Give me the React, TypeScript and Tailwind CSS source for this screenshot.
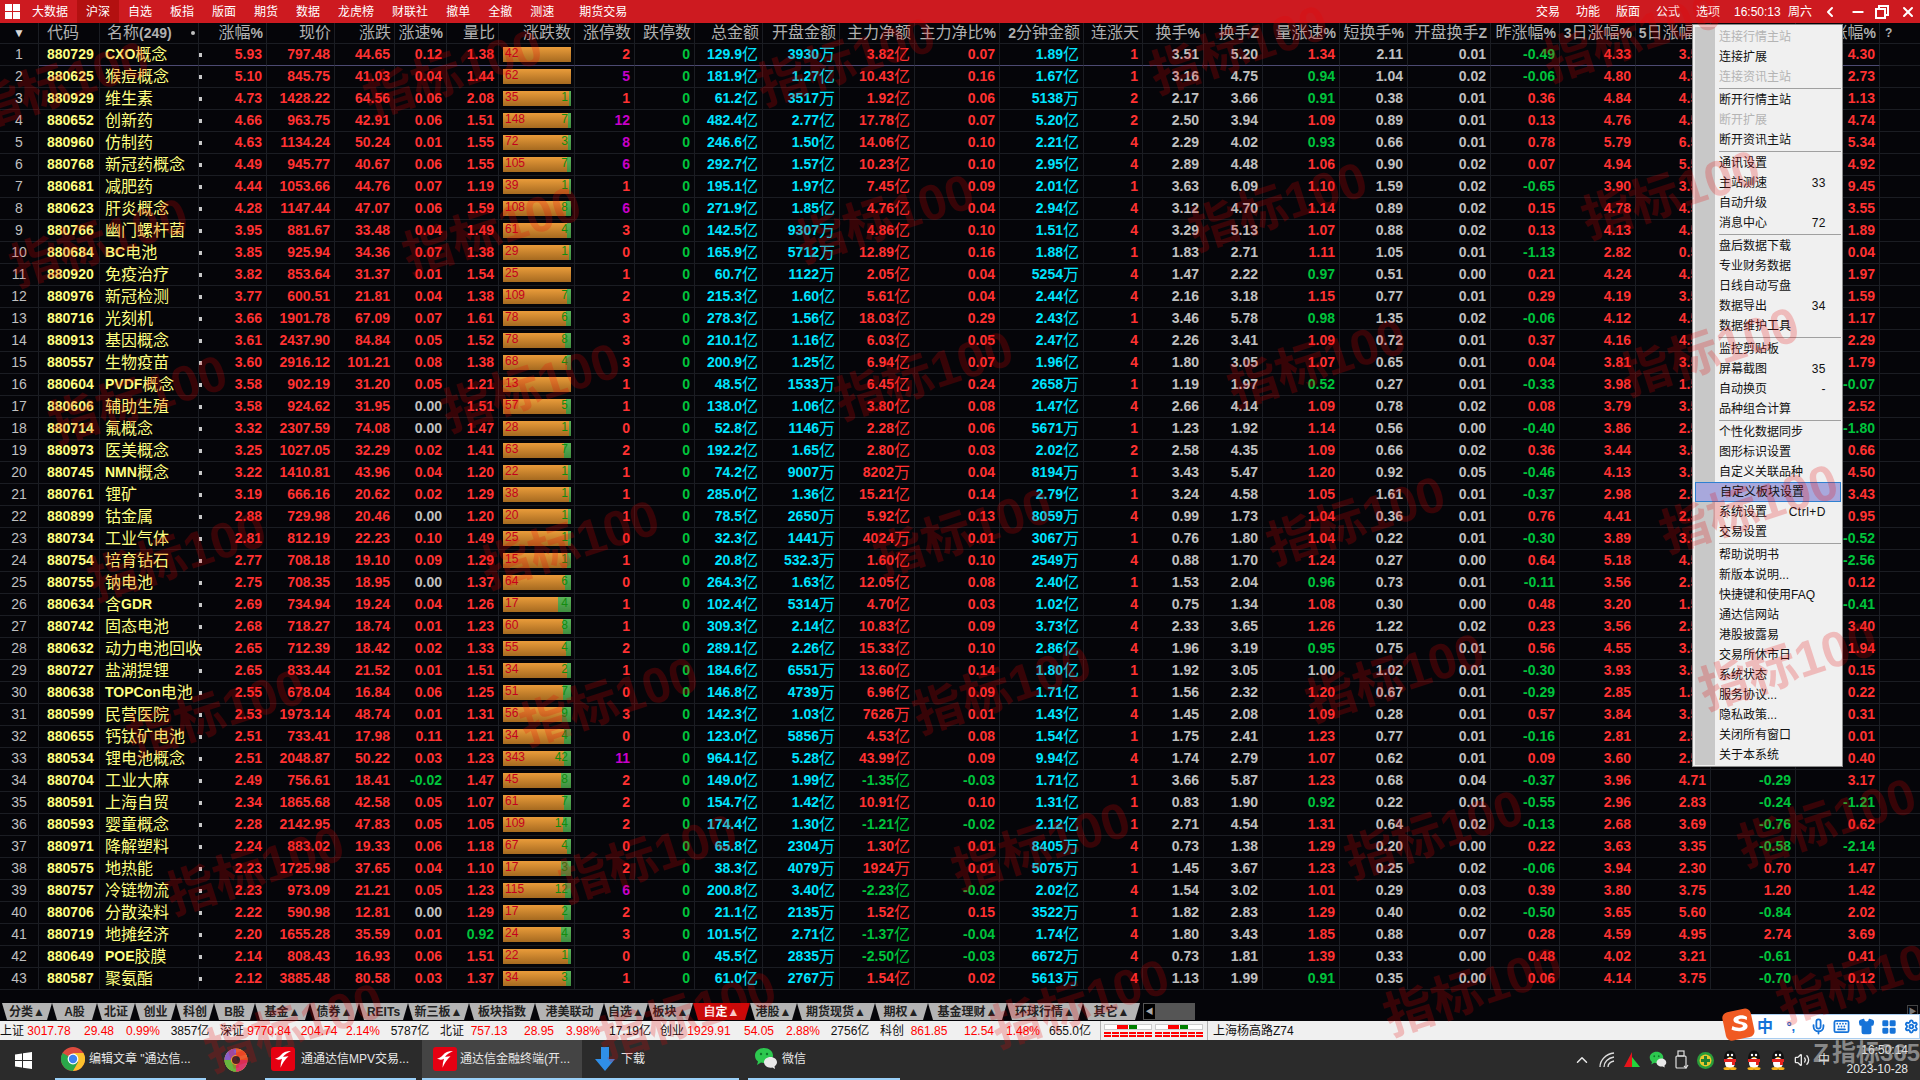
import React from "react";
import { ChevronUp, ChevronLeft, Minus, X, Mic, Keyboard, Shirt, LayoutGrid, Settings, Volume2 } from "lucide-react";

const RAW = `880729 CXO概念 5.93 797.48 44.65 0.12 1.38 42 0 2 129.9亿 3930万 3.82亿 0.07 1.89亿 1 3.51 5.20 1.34 2.11 0.01 -0.49 4.33 3.50 1.20 4.30
880625 猴痘概念 5.10 845.75 41.03 0.04 1.44 62 0 5 181.9亿 1.27亿 10.43亿 0.16 1.67亿 1 3.16 4.75 0.94 1.04 0.02 -0.06 4.80 4.50 1.20 2.73
880929 维生素 4.73 1428.22 64.56 0.06 2.08 35 1 1 61.2亿 3517万 1.92亿 0.06 5138万 2 2.17 3.66 0.91 0.38 0.01 0.36 4.84 4.50 1.20 1.13
880652 创新药 4.66 963.75 42.91 0.06 1.51 148 7 12 482.4亿 2.77亿 17.78亿 0.07 5.20亿 2 2.50 3.94 1.09 0.89 0.01 0.13 4.76 4.50 1.20 4.74
880960 仿制药 4.63 1134.24 50.24 0.01 1.55 72 3 8 246.6亿 1.50亿 14.06亿 0.10 2.21亿 4 2.29 4.02 0.93 0.66 0.01 0.78 5.79 6.50 1.20 5.34
880768 新冠药概念 4.49 945.77 40.67 0.06 1.55 105 7 6 292.7亿 1.57亿 10.23亿 0.10 2.95亿 4 2.89 4.48 1.06 0.90 0.02 0.07 4.94 5.50 1.20 4.92
880681 减肥药 4.44 1053.66 44.76 0.07 1.19 39 1 1 195.1亿 1.97亿 7.45亿 0.09 2.01亿 1 3.63 6.09 1.10 1.59 0.02 -0.65 3.90 3.50 1.20 9.45
880623 肝炎概念 4.28 1147.44 47.07 0.06 1.59 108 8 6 271.9亿 1.85亿 4.76亿 0.04 2.94亿 4 3.12 4.70 1.14 0.89 0.02 0.15 4.78 4.50 1.20 3.55
880766 幽门螺杆菌 3.95 881.67 33.48 0.04 1.49 61 4 3 142.5亿 9307万 4.86亿 0.10 1.51亿 4 3.29 5.13 1.07 0.88 0.02 0.13 4.13 4.50 1.20 1.89
880684 BC电池 3.85 925.94 34.36 0.07 1.38 29 1 0 165.9亿 5712万 12.89亿 0.16 1.88亿 1 1.83 2.71 1.11 1.05 0.01 -1.13 2.82 0.50 1.20 0.04
880920 免疫治疗 3.82 853.64 31.37 0.01 1.54 25 0 1 60.7亿 1122万 2.05亿 0.04 5254万 4 1.47 2.22 0.97 0.51 0.00 0.21 4.24 4.50 1.20 1.97
880976 新冠检测 3.77 600.51 21.81 0.04 1.38 109 7 2 215.3亿 1.60亿 5.61亿 0.04 2.44亿 4 2.16 3.18 1.15 0.77 0.01 0.29 4.19 3.50 1.20 1.59
880716 光刻机 3.66 1901.78 67.09 0.07 1.61 78 6 3 278.3亿 1.56亿 18.03亿 0.29 2.43亿 1 3.46 5.78 0.98 1.35 0.02 -0.06 4.12 4.50 1.20 1.17
880913 基因概念 3.61 2437.90 84.84 0.05 1.52 78 8 3 210.1亿 1.16亿 6.03亿 0.05 2.47亿 4 2.26 3.41 1.09 0.72 0.01 0.37 4.16 4.50 1.20 2.29
880557 生物疫苗 3.60 2916.12 101.21 0.08 1.38 68 4 3 200.9亿 1.25亿 6.94亿 0.07 1.96亿 4 1.80 3.05 1.07 0.65 0.01 0.04 3.81 3.50 1.20 1.79
880604 PVDF概念 3.58 902.19 31.20 0.05 1.21 13 0 1 48.5亿 1533万 6.45亿 0.24 2658万 1 1.19 1.97 0.52 0.27 0.01 -0.33 3.98 1.50 1.20 -0.07
880606 辅助生殖 3.58 924.62 31.95 0.00 1.51 57 5 1 138.0亿 1.06亿 3.80亿 0.08 1.47亿 4 2.66 4.14 1.09 0.78 0.02 0.08 3.79 3.50 1.20 2.52
880714 氟概念 3.32 2307.59 74.08 0.00 1.47 28 1 0 52.8亿 1146万 2.28亿 0.06 5671万 1 1.23 1.92 1.14 0.56 0.00 -0.40 3.86 2.50 1.20 -1.80
880973 医美概念 3.25 1027.05 32.29 0.02 1.41 63 7 2 192.2亿 1.65亿 2.80亿 0.03 2.02亿 2 2.58 4.35 1.09 0.66 0.02 0.36 3.44 3.50 1.20 0.66
880745 NMN概念 3.22 1410.81 43.96 0.04 1.20 22 1 1 74.2亿 9007万 8202万 0.04 8194万 1 3.43 5.47 1.20 0.92 0.05 -0.46 4.13 3.50 1.20 4.50
880761 锂矿 3.19 666.16 20.62 0.02 1.29 38 1 1 285.0亿 1.36亿 15.21亿 0.14 2.79亿 1 3.24 4.58 1.05 1.61 0.01 -0.37 2.98 2.50 1.20 3.43
880899 钴金属 2.88 729.98 20.46 0.00 1.20 20 1 1 78.5亿 2650万 5.92亿 0.13 8059万 4 0.99 1.73 1.04 0.36 0.01 0.76 4.41 2.50 1.20 0.95
880734 工业气体 2.81 812.19 22.23 0.10 1.49 25 1 0 32.3亿 1441万 4024万 0.01 3067万 1 0.76 1.80 1.04 0.22 0.01 -0.30 3.89 3.50 1.20 -0.52
880754 培育钻石 2.77 708.18 19.10 0.09 1.29 15 1 1 20.8亿 532.3万 1.60亿 0.10 2549万 4 0.88 1.70 1.24 0.27 0.00 0.64 5.18 4.50 1.20 -2.56
880755 钠电池 2.75 708.35 18.95 0.00 1.37 64 6 0 264.3亿 1.63亿 12.05亿 0.08 2.40亿 1 1.53 2.04 0.96 0.73 0.01 -0.11 3.56 2.50 1.20 0.12
880634 含GDR 2.69 734.94 19.24 0.04 1.26 17 4 1 102.4亿 5314万 4.70亿 0.03 1.02亿 4 0.75 1.34 1.08 0.30 0.00 0.48 3.20 1.50 1.20 -0.41
880742 固态电池 2.68 718.27 18.74 0.01 1.23 60 8 1 309.3亿 2.14亿 10.83亿 0.09 3.73亿 4 2.33 3.65 1.26 1.22 0.02 0.23 3.56 2.50 1.20 3.40
880632 动力电池回收 2.65 712.39 18.42 0.02 1.33 55 4 2 289.1亿 2.26亿 15.33亿 0.10 2.86亿 4 1.96 3.19 0.95 0.75 0.01 0.56 4.55 3.50 1.20 1.94
880727 盐湖提锂 2.65 833.44 21.52 0.01 1.51 34 2 1 184.6亿 6551万 13.60亿 0.14 1.80亿 1 1.92 3.05 1.00 1.02 0.01 -0.30 3.93 3.50 1.20 0.15
880638 TOPCon电池 2.55 678.04 16.84 0.06 1.25 51 7 0 146.8亿 4739万 6.96亿 0.09 1.71亿 1 1.56 2.32 1.20 0.67 0.01 -0.29 2.85 1.50 1.20 0.22
880599 民营医院 2.53 1973.14 48.74 0.01 1.31 56 9 3 142.3亿 1.03亿 7626万 0.01 1.43亿 4 1.45 2.08 1.09 0.28 0.01 0.57 3.84 3.50 1.20 0.31
880655 钙钛矿电池 2.51 733.41 17.98 0.11 1.21 34 4 0 123.0亿 5856万 4.53亿 0.08 1.54亿 1 1.75 2.41 1.23 0.77 0.01 -0.16 2.81 2.50 1.20 0.01
880534 锂电池概念 2.51 2048.87 50.22 0.03 1.23 343 42 11 964.1亿 5.28亿 43.99亿 0.09 9.94亿 4 1.74 2.79 1.07 0.62 0.01 0.09 3.60 2.50 1.20 0.40
880704 工业大麻 2.49 756.61 18.41 -0.02 1.47 45 8 2 149.0亿 1.99亿 -1.35亿 -0.03 1.71亿 1 3.66 5.87 1.23 0.68 0.04 -0.37 3.96 4.71 -0.29 3.17
880591 上海自贸 2.34 1865.68 42.58 0.05 1.07 61 7 2 154.7亿 1.42亿 10.91亿 0.10 1.31亿 1 0.83 1.90 0.92 0.22 0.01 -0.55 2.96 2.83 -0.24 -1.21
880593 婴童概念 2.28 2142.95 47.83 0.05 1.05 109 14 2 174.4亿 1.30亿 -1.21亿 -0.02 2.12亿 1 2.71 4.54 1.31 0.64 0.02 -0.13 2.68 3.69 -0.76 0.62
880971 降解塑料 2.24 883.02 19.33 0.06 1.18 67 4 0 65.8亿 2304万 1.30亿 0.01 8405万 4 0.73 1.38 1.29 0.20 0.00 0.22 3.63 3.35 -0.58 -2.14
880575 地热能 2.23 1725.98 37.65 0.04 1.10 17 3 2 38.3亿 4079万 1924万 0.01 5075万 1 1.45 3.67 1.23 0.25 0.02 -0.06 3.94 2.30 0.70 1.47
880757 冷链物流 2.23 973.09 21.21 0.05 1.23 115 12 6 200.8亿 3.40亿 -2.23亿 -0.02 2.02亿 4 1.54 3.02 1.01 0.29 0.03 0.39 3.80 3.75 1.20 1.42
880706 分散染料 2.22 590.98 12.81 0.00 1.29 17 2 2 21.1亿 2135万 1.52亿 0.15 3522万 1 1.82 2.83 1.29 0.40 0.02 -0.50 3.65 5.60 -0.84 2.02
880719 地摊经济 2.20 1655.28 35.59 0.01 0.92 24 4 3 101.5亿 2.71亿 -1.37亿 -0.04 1.74亿 4 1.80 3.43 1.85 0.88 0.07 0.28 4.59 4.95 2.74 3.69
880649 POE胶膜 2.14 808.43 16.93 0.06 1.51 22 1 0 45.5亿 2835万 -2.50亿 -0.03 6672万 4 0.73 1.81 1.39 0.33 0.00 0.48 4.02 3.21 -0.61 0.41
880587 聚氨酯 2.12 3885.48 80.58 0.03 1.37 34 3 1 61.0亿 2767万 1.54亿 0.02 5613万 4 1.13 1.99 0.91 0.35 0.00 0.06 4.14 3.75 -0.70 0.12`;

const ROWS = RAW.split("\n").map((l) => l.trim().split(" "));

const GRID =
  "grid grid-cols-[39px_61px_99px_68px_68px_60px_52px_52px_76px_60px_60px_68px_77px_75px_85px_84px_59px_61px_59px_77px_68px_83px_69px_76px_75px_85px_84px_40px]";

const RED = "text-[#ff3232]";
const GREEN = "text-[#00c43c]";
const GREY = "text-[#c0c0c0]";
const CYAN = "text-[#00e4ff]";

const sign = (v: string) => (parseFloat(v) > 0 ? RED : parseFloat(v) < 0 ? GREEN : GREY);
const ratio = (v: string) => (parseFloat(v) > 1 ? RED : parseFloat(v) < 1 ? GREEN : GREY);

const HEADERS: [string, string?][] = [
  ["代码"], ["名称"], ["涨幅%"], ["现价"], ["涨跌"], ["涨速%"], ["量比"], ["涨跌数"], ["涨停数"], ["跌停数"],
  ["总金额"], ["开盘金额"], ["主力净额"], ["主力净比%"], ["2分钟金额"], ["连涨天"], ["换手%"], ["换手Z"],
  ["量涨速%"], ["短换手%"], ["开盘换手Z"], ["昨涨幅%"], ["3日涨幅%"], ["5日涨幅%"], ["10日涨幅%"], ["20日涨幅%"],
];

function Label({ text }: { text: string }) {
  const parts = text.split(/([A-Za-z0-9%]+)/).filter(Boolean);
  return (
    <>
      {parts.map((p, i) =>
        /^[A-Za-z0-9%]+$/.test(p) ? (
          <span key={i} className="text-[14px] font-bold">{p}</span>
        ) : (
          <span key={i}>{p}</span>
        )
      )}
    </>
  );
}

function Cell({ children, color, purple }: { children: React.ReactNode; color?: string; purple?: boolean }) {
  return (
    <div
      className={`flex h-[22px] items-center justify-end whitespace-nowrap border-r border-b border-r-[#1b1d23] pr-[4px] text-[14px] font-bold ${
        purple ? "border-b-[#4c4a72]" : "border-b-[#1b1d23]"
      } ${color ?? ""}`}
    >
      {children}
    </div>
  );
}

function Amount({ v, color, purple }: { v: string; color: string; purple?: boolean }) {
  return (
    <Cell color={color} purple={purple}>
      {v.slice(0, -1)}
      <span className="text-[16px] font-normal">{v.slice(-1)}</span>
    </Cell>
  );
}

function Bar({ up, down, purple }: { up: number; down: number; purple?: boolean }) {
  const g = (down / (up + down)) * 68;
  return (
    <div
      className={`flex h-[22px] items-center border-r border-b border-r-[#1b1d23] pl-[4px] ${
        purple ? "border-b-[#4c4a72]" : "border-b-[#1b1d23]"
      }`}
    >
      <div className="relative flex h-[15px] w-[68px] bg-linear-to-b from-[#ea9c3a] to-[#a66a20]">
        {down > 0 && (
          <div
            className="absolute top-0 right-0 h-full bg-linear-to-b from-[#5cb45a] to-[#3f8f3f]"
            style={{ width: Math.max(g, 2) }}
          />
        )}
        <div className="relative flex w-full items-start justify-between px-[2px] text-[12px] leading-[13px]">
          <span className="text-[#c4001e]">{up}</span>
          {down > 0 && <span className="pr-[1px] text-[#128c10]">{down}</span>}
        </div>
      </div>
    </div>
  );
}

function Name({ v }: { v: string }) {
  const parts = v.split(/([A-Za-z]+)/).filter(Boolean);
  return (
    <>
      {parts.map((p, i) =>
        /^[A-Za-z]+$/.test(p) ? (
          <span key={i} className="text-[14px] font-bold">{p}</span>
        ) : (
          <span key={i} className="text-[16px] font-normal">{p}</span>
        )
      )}
    </>
  );
}

function Row({ r, n }: { r: string[]; n: number }) {
  const [code, name, zf, price, zd, zs, lb, up, down, zt, total, open, main, mainp, two, days, hs, hsz, lzs, dhs, khs, zzf, d3, d5, d10, d20] = r;
  const p = n === 1;
  const amt = (v: string) => (v.startsWith("-") ? GREEN : RED);
  return (
    <div className={GRID}>
      <div className="flex h-[22px] items-center justify-center border-r border-b border-[#1b1d23] text-[14px] text-[#c0c0c0]">{n}</div>
      <Cell color="text-[#ffff80] !justify-start !pr-0 pl-[8px]" purple={p}>{code}</Cell>
      <Cell color="text-[#ffff80] !justify-start !pr-0 pl-[5px]" purple={p}><Name v={name} /></Cell>
      <Cell color={`${RED} !justify-between`} purple={p}>
        <span className="h-[4px] w-[3px] bg-[#c8c8c8]" />
        <span>{zf}</span>
      </Cell>
      <Cell color={RED} purple={p}>{price}</Cell>
      <Cell color={RED} purple={p}>{zd}</Cell>
      <Cell color={sign(zs)} purple={p}>{zs}</Cell>
      <Cell color={ratio(lb)} purple={p}>{lb}</Cell>
      <Bar up={+up} down={+down} purple={p} />
      <Cell color={+zt >= 5 ? "text-[#c800c8]" : RED} purple={p}>{zt}</Cell>
      <Cell color={GREEN} purple={p}>0</Cell>
      <Amount v={total} color={CYAN} purple={p} />
      <Amount v={open} color={CYAN} purple={p} />
      <Amount v={main} color={amt(main)} purple={p} />
      <Cell color={sign(mainp)} purple={p}>{mainp}</Cell>
      <Amount v={two} color={CYAN} purple={p} />
      <Cell color={RED} purple={p}>{days}</Cell>
      <Cell color={GREY} purple={p}>{hs}</Cell>
      <Cell color={GREY} purple={p}>{hsz}</Cell>
      <Cell color={ratio(lzs)} purple={p}>{lzs}</Cell>
      <Cell color={GREY} purple={p}>{dhs}</Cell>
      <Cell color={GREY} purple={p}>{khs}</Cell>
      <Cell color={sign(zzf)} purple={p}>{zzf}</Cell>
      <Cell color={sign(d3)} purple={p}>{d3}</Cell>
      <Cell color={sign(d5)} purple={p}>{d5}</Cell>
      <Cell color={sign(d10)} purple={p}>{d10}</Cell>
      <Cell color={sign(d20)} purple={p}>{d20}</Cell>
      <div className="h-[22px] border-b border-[#1b1d23]" />
    </div>
  );
}

function TableHeader() {
  return (
    <div className={`${GRID} h-[21px] border-b border-[#1b1d23] text-[16px] leading-[20px] text-[#b0b0b0]`}>
      <div className="flex items-center justify-center border-r border-[#1b1d23] text-[12px] text-[#d8d8d8]">▼</div>
      <div className="border-r border-[#1b1d23] pl-[8px]">代码</div>
      <div className="flex items-center justify-between border-r border-[#1b1d23] pr-[3px] pl-[7px]">
        <span>名称<span className="text-[14px] font-bold">(249)</span></span>
        <span className="h-[4px] w-[4px] rounded-full bg-[#c0c0c0]" />
      </div>
      {HEADERS.slice(2).map(([t]) => (
        <div key={t} className="flex items-center justify-end whitespace-nowrap border-r border-[#1b1d23] pr-[3px]">
          <Label text={t} />
        </div>
      ))}
      <div className="pl-[5px] text-[12px] font-bold text-[#b0b0b0]">?</div>
    </div>
  );
}

function TopBar() {
  const left = [
    ["大数据", "ml-[12px]"], ["沪深", ""], ["自选", ""], ["板指", ""], ["版面", ""], ["期货", ""], ["数据", ""],
    ["龙虎榜", ""], ["财联社", ""], ["撤单", ""], ["全撤", ""], ["测速", ""],
  ];
  return (
    <div className="flex h-[23px] items-center bg-[#cd1a20] text-[12px] text-white">
      <div className="ml-[5px] grid h-[15px] w-[15px] grid-cols-2 gap-[1px]">
        <span className="bg-white" /><span className="bg-white" /><span className="bg-white" /><span className="bg-white" />
      </div>
      <div className="flex h-full items-center">
        {left.map(([t, c]) =>
          t === "沪深" ? (
            <div key={t} className="flex h-full w-[42px] items-center justify-center bg-[#b31010]">{t}</div>
          ) : (
            <div key={t} className={`mx-[9px] ${c}`}>{t}</div>
          )
        )}
        <div className="ml-[16px]">期货交易</div>
      </div>
      <div className="ml-auto flex items-center">
        <span className="w-[40px]">交易</span>
        <span className="w-[40px]">功能</span>
        <span className="w-[40px]">版面</span>
        <span className="w-[40px]">公式</span>
        <span className="w-[38px]">选项</span>
        <span className="w-[54px]">16:50:13</span>
        <span className="w-[34px]">周六</span>
        <ChevronLeft className="mr-[12px] h-[16px] w-[16px]" strokeWidth={3} />
        <Minus className="mr-[9px] h-[16px] w-[16px]" strokeWidth={3} />
        <svg className="mr-[11px]" width="14" height="14" viewBox="0 0 14 14" fill="none" stroke="white" strokeWidth="2">
          <rect x="1" y="4" width="9" height="9" />
          <path d="M4 4V1h9v9h-3" />
        </svg>
        <X className="mr-[4px] h-[16px] w-[16px]" strokeWidth={3} />
      </div>
    </div>
  );
}

const TABS_DATA: [string, string][] = [
  ["分类▲", "w-[50px]"], ["A股", "w-[45px]"], ["北证", "w-[38px]"], ["创业", "w-[41px]"], ["科创", "w-[38px]"], ["B股", "w-[41px]"],
  ["基金▲", "w-[55px]"], ["债券▲", "w-[49px]"], ["REITs", "w-[49px]"], ["新三板▲", "w-[61px]"], ["板块指数", "w-[66px]"], ["港美联动", "w-[69px]"],
  ["自选▲", "w-[44px]"], ["板块▲", "w-[45px]"], ["自定▲", "w-[57px]"], ["港股▲", "w-[47px]"], ["期货现货▲", "w-[78px]"], ["期权▲", "w-[53px]"],
  ["基金理财▲", "w-[79px]"], ["环球行情▲", "w-[76px]"], ["其它▲", "w-[57px]"],
];

function Tabs() {
  return (
    <div className="flex h-[31px] items-end pb-[1px]">
      <div className="ml-[2px] flex h-[17px]">
        {TABS_DATA.map(([t, w]) => (
          <div
            key={t}
            className={`${w} flex items-center justify-center whitespace-nowrap text-[12px] font-bold [clip-path:polygon(0_0,100%_0,calc(100%-5px)_100%,5px_100%)] ${
              t === "自定▲" ? "bg-[#c80a0a] text-white" : "bg-[#b4b4b4] text-[#222]"
            }`}
          >
            {t}
          </div>
        ))}
      </div>
      <div className="ml-[3px] flex h-[17px] w-[52px]">
        <div className="flex w-[13px] items-center justify-center border border-[#555] bg-black text-[8px] text-[#aaa]">◀</div>
        <div className="flex-1 bg-[#555]" />
      </div>
      <div className="mr-[2px] mb-[1px] ml-auto flex h-[14px] w-[11px] items-center justify-center border border-[#444] text-[8px] text-[#777]">▶</div>
    </div>
  );
}

const QUOTES = [
  ["上证", "3017.78", "29.48", "0.99%", "3857亿"],
  ["深证", "9770.84", "204.74", "2.14%", "5787亿"],
  ["北证", "757.13", "28.95", "3.98%", "17.19亿"],
  ["创业", "1929.91", "54.05", "2.88%", "2756亿"],
  ["科创", "861.85", "12.54", "1.48%", "655.0亿"],
];

function Signal() {
  return (
    <div className="w-[48px]">
      <div className="flex h-[6px] border border-[#ccc] bg-white">
        <span className="w-[12px]" />
        <span className="w-[11px] bg-[#ff0000]" />
        <span className="ml-[1px] w-[8px] bg-[#008000]" />
      </div>
      <div className="mt-[2px] flex gap-[1px]">
        {[0, 1, 2, 3, 4, 5].map((i) => <span key={i} className="h-[2px] flex-1 bg-[#ff0000]" />)}
      </div>
      <div className="mt-[1px] flex gap-[1px]">
        {[0, 1, 2, 3, 4, 5].map((i) => <span key={i} className="h-[2px] flex-1 bg-[#ff0000]" />)}
      </div>
    </div>
  );
}

function StatusBar() {
  return (
    <div className="flex h-[19px] items-center whitespace-nowrap bg-[#f0f0f0] text-[12px] text-[#101010]">
      {QUOTES.map((q) => (
        <div key={q[0]} className="grid w-[220px] grid-cols-[26px_46px_54px_34px_60px]">
          <span>{q[0]}</span>
          <span className="text-center text-[#ff0000]">{q[1]}</span>
          <span className="text-center text-[#ff0000]">{q[2]}</span>
          <span className="text-center text-[#ff0000]">{q[3]}</span>
          <span className="text-center">{q[4]}</span>
        </div>
      ))}
      <div className="flex h-full w-[108px] items-center gap-[3px] border-x border-[#b0b0b0] px-[3px]">
        <Signal />
        <Signal />
      </div>
      <span className="ml-[5px]">上海杨高路Z74</span>
    </div>
  );
}

function Windows() {
  return (
    <svg width="17" height="17" viewBox="0 0 17 17" fill="#fff">
      <path d="M0 2.4 7 1.4v6.5H0zM8 1.2 17 0v7.9H8zM0 9h7v6.6L0 14.6zM8 9h9v8l-9-1.2z" />
    </svg>
  );
}

function Chrome() {
  return (
    <svg width="24" height="24" viewBox="0 0 24 24">
      <circle cx="12" cy="12" r="12" fill="#dd4b3e" />
      <path d="M12 12 1.6 6A12 12 0 0 0 12 24l5.2-9z" fill="#2aa84a" />
      <path d="M12 6h10.4A12 12 0 0 1 12 24l5.2-9z" fill="#fbc02d" />
      <circle cx="12" cy="12" r="5.4" fill="#fff" />
      <circle cx="12" cy="12" r="4.2" fill="#3f82f0" />
    </svg>
  );
}

function Pinwheel() {
  return (
    <svg width="24" height="24" viewBox="0 0 24 24">
      <circle cx="12" cy="12" r="11.5" fill="#f4c63a" />
      <path d="M12 .5A11.5 11.5 0 0 1 23.5 12H14A6 6 0 0 0 12 7z" fill="#ea5b30" />
      <path d="M23.5 12A11.5 11.5 0 0 1 12 23.5V17a5 5 0 0 0 3-5z" fill="#d83a6c" />
      <path d="M12 23.5A11.5 11.5 0 0 1 .5 12H7a5 5 0 0 0 5 5z" fill="#67b53f" />
      <path d="M.5 12A11.5 11.5 0 0 1 12 .5V7a5 5 0 0 0-5 5z" fill="#8a5ec9" />
      <circle cx="12" cy="12" r="4" fill="#2b2b2b" />
    </svg>
  );
}

function Tdx() {
  return (
    <svg width="24" height="24" viewBox="0 0 24 24">
      <rect width="24" height="24" rx="3" fill="#e60012" />
      <path d="M20 4c-5 0-8 1.5-10 4-2 2.4-4 3.4-6 3.6 2.5 1.6 5 1.2 7 .2-1 3-1.5 6-1.5 9 2-4.5 4.5-8.5 8-11.5-2 .3-4 .6-5.5.4C14 7.500 17 5.500 20 4z" fill="#fff" />
    </svg>
  );
}

function DownArrow() {
  return (
    <svg width="20" height="24" viewBox="0 0 20 24">
      <path d="M6 0h8v12h6L10 24 0 12h6z" fill="#2f8fe8" />
    </svg>
  );
}

function Wechat({ size = 24 }: { size?: number }) {
  return (
    <svg width={size} height={size} viewBox="0 0 24 24">
      <path d="M10 1c5 0 9 3.300 9 7.500S15 16 10 16c-1 0-2-.1-3-.4L3 18l1-3.500C2 13 1 11 1 8.500 1 4.300 5 1 10 1z" fill="#2dc84f" />
      <circle cx="7" cy="7" r="1.200" fill="#0d7a2a" />
      <circle cx="13" cy="7" r="1.200" fill="#0d7a2a" />
      <path d="M16.500 10c3.600 0 6.500 2.400 6.500 5.300 0 1.700-1 3.200-2.500 4.200l.6 2.500-2.800-1.500c-.6.100-1.200.2-1.800.2-3.600 0-6.500-2.400-6.500-5.400S12.900 10 16.500 10z" fill="#e8e8e8" />
    </svg>
  );
}

function QQ() {
  return (
    <svg width="16" height="20" viewBox="0 0 16 20">
      <ellipse cx="8" cy="8" rx="6" ry="7.500" fill="#111" />
      <ellipse cx="8" cy="13" rx="5" ry="5.500" fill="#fff" />
      <rect x="2" y="9" width="12" height="3" fill="#e5231f" />
      <rect x="10" y="11" width="3" height="4" fill="#e5231f" />
      <ellipse cx="5" cy="18.500" rx="3.500" ry="1.500" fill="#f6b21a" />
      <ellipse cx="11" cy="18.500" rx="3.500" ry="1.500" fill="#f6b21a" />
      <circle cx="6" cy="5" r="1.200" fill="#fff" />
      <circle cx="10" cy="5" r="1.200" fill="#fff" />
      <path d="M6 7h4l-2 1.600z" fill="#f6b21a" />
    </svg>
  );
}

function Taskbar() {
  return (
    <div className="relative flex h-[40px] items-stretch bg-[#2b2b2b] text-[12px] text-[#e8e8e8]">
      <div className="flex w-[55px] items-center pl-[15px]"><Windows /></div>
      <div className="flex w-[151px] items-center gap-[4px] border-b-2 border-[#9ad0f8] pl-[6px]"><Chrome /><span>编辑文章 "通达信...</span></div>
      <div className="flex w-[59px] items-center justify-center"><Pinwheel /></div>
      <div className="flex w-[151px] items-center gap-[6px] border-b-2 border-[#9ad0f8] pl-[6px]"><Tdx /><span>通通达信MPV交易...</span></div>
      <div className="ml-[6px] flex w-[160px] items-center gap-[3px] border-b-2 border-[#9ad0f8] bg-[#444] pl-[11px]"><Tdx /><span>通达信金融终端(开...</span></div>
      <div className="flex w-[157px] items-center gap-[6px] border-b-2 border-[#9ad0f8] pl-[13px]"><DownArrow /><span>下载</span></div>
      <div className="ml-[9px] flex w-[152px] items-center gap-[4px] border-b-2 border-[#9ad0f8] pl-[6px]"><Wechat /><span>微信</span></div>
      <div className="ml-auto flex items-center gap-[8px] pr-[12px]">
        <ChevronUp className="h-[18px] w-[18px] text-[#e8e8e8]" />
        <svg width="16" height="16" viewBox="0 0 16 16" fill="none" stroke="#ddd" strokeWidth="1.300">
          <path d="M1 15c0-7 6-13 14-14M5 15c0-5 4-9 10-10M9 15c0-3 2-5 6-6" />
        </svg>
        <svg width="18" height="16" viewBox="0 0 18 16">
          <path d="M9 0 1 15h8z" fill="#e5141a" />
          <path d="M9 5 17 15H9z" fill="#23d43c" />
        </svg>
        <Wechat size={18} />
        <svg width="14" height="20" viewBox="0 0 14 20" fill="none" stroke="#e0e0e0" strokeWidth="1.200">
          <rect x="3" y="1" width="6" height="5" />
          <rect x="1" y="6" width="10" height="12" rx="1" />
          <path d="m9 16 2 2 2-3" />
        </svg>
        <svg width="17" height="17" viewBox="0 0 17 17">
          <circle cx="8.500" cy="8.500" r="8.500" fill="#2a9c3a" />
          <circle cx="8.500" cy="8.500" r="6" fill="#e8c62e" />
          <path d="M7 4h3v3h3v3h-3v3H7v-3H4V7h3z" fill="#1f7f30" />
        </svg>
        <QQ /><QQ /><QQ />
        <Volume2 className="h-[16px] w-[16px] text-[#e8e8e8]" />
        <span className="w-[14px] text-[12px]">中</span>
        <div className="ml-[2px] w-[66px] text-right leading-[19px]">
          <div>16:50:14</div>
          <div>2023-10-28</div>
        </div>
      </div>
      <div className="absolute top-[2px] right-0 flex items-center text-[24px] leading-[22px] font-bold text-[#c8c8c8]/60">
        <span className="mr-[3px] text-[26px]">Z</span>指标365
      </div>
    </div>
  );
}

function Sogou() {
  return (
    <div className="absolute right-0 bottom-[41px] flex h-[25px] w-[192px] items-center border border-[#a9cdf0] bg-white pl-[28px] text-[#1673d8]">
      <span className="w-[24px] text-[16px] font-bold">中</span>
      <span className="ml-[6px] w-[24px] text-[13px] font-bold leading-none">°,</span>
      <span className="w-[24px]"><Mic className="h-[17px] w-[17px]" strokeWidth={2.5} /></span>
      <span className="w-[25px]"><Keyboard className="h-[17px] w-[17px]" strokeWidth={2.5} /></span>
      <span className="w-[24px]"><Shirt className="h-[17px] w-[17px]" fill="#1673d8" /></span>
      <span className="w-[24px]"><LayoutGrid className="h-[16px] w-[16px]" fill="#1673d8" /></span>
      <Settings className="h-[15px] w-[15px]" strokeWidth={3} />
      <div className="absolute top-[-8px] left-[-8px]">
        <svg width="36" height="36" viewBox="0 0 36 36">
          <rect x="3" y="3" width="29" height="29" rx="6" fill="#f05a22" transform="rotate(-12 18 18)" />
          <path d="M26 10c-2-1.500-5-2-8-1.500-3.500.6-6 2.500-5.500 5 .5 3 5 3 8 4 2 .7 1.800 2.500-.5 3-3 .6-6-.2-8.500-1.500l-1 3.500c3 1.500 6.500 2 10 1.500 4-.6 6.500-2.800 6-5.500-.5-3-5-3.500-8-4.300-1.800-.5-1.500-2 .5-2.300 2.500-.4 4.800.1 6.800 1z" fill="#fff" />
        </svg>
      </div>
    </div>
  );
}

const MENU: string[][] = [
  ["~连接行情主站", "连接扩展", "~连接资讯主站"],
  ["断开行情主站", "~断开扩展", "断开资讯主站"],
  ["通讯设置", "主站测速|33", "自动升级", "消息中心|72"],
  ["盘后数据下载", "专业财务数据", "日线自动写盘", "数据导出|34", "数据维护工具"],
  ["监控剪贴板", "屏幕截图|35", "自动换页|-", "品种组合计算"],
  ["个性化数据同步", "图形标识设置", "自定义关联品种", "自定义板块设置", "系统设置|Ctrl+D", "交易设置"],
  ["帮助说明书", "新版本说明...", "快捷键和使用FAQ", "通达信网站", "港股披露易", "交易所休市日", "系统状态", "服务协议...", "隐私政策...", "关闭所有窗口", "关于本系统"],
];

function Menu() {
  return (
    <div className="absolute top-[24px] left-[1692px] w-[151px] border border-[#8c8c8c] bg-[#f0f0f0] pt-[2px] pr-[1px] pb-[1px] pl-[2px] text-[12px] text-[#111]">
      <div className="bg-[linear-gradient(to_right,#c8c8c8_20px,#f0f0f0_20px)]">
        {MENU.map((sec, si) => (
          <div key={si}>
            {si > 0 && (
              <div className="flex h-[3px] items-center pl-[24px]">
                <div className="h-[1px] w-full bg-[#a0a0a0]" />
              </div>
            )}
            {sec.map((it) => {
              const disabled = it.startsWith("~");
              const [label, key] = it.replace("~", "").split("|");
              const hl = label === "自定义板块设置";
              return (
                <div
                  key={it}
                  className={`flex h-[20px] items-center justify-between pr-[15px] pl-[24px] ${
                    hl ? "border border-[#2f80d0] bg-[#a8a8dc]" : ""
                  } ${disabled ? "text-[#b4b4b4]" : ""}`}
                >
                  <span>{label}</span>
                  {key && <span className="tracking-[0.5px]">{key}</span>}
                </div>
              );
            })}
          </div>
        ))}
      </div>
    </div>
  );
}

function Watermarks() {
  const items: { x: number; y: number }[] = [];
  for (let i = -2; i <= 5; i++) {
    for (let j = -2; j <= 6; j++) {
      const x = 492 + 393 * i + 39 * j;
      const y = 230 - 12 * i + 157 * j;
      if (x > -120 && x < 2040 && y > -60 && y < 1130) items.push({ x, y });
    }
  }
  return (
    <div className="pointer-events-none absolute inset-0 overflow-hidden">
      {items.map((p, k) => (
        <span
          key={k}
          className="absolute -translate-x-1/2 -translate-y-1/2 -rotate-[18deg] text-[50px] leading-none font-bold whitespace-nowrap text-[#e60000]/22"
          style={{ left: p.x, top: p.y }}
        >
          指标100
        </span>
      ))}
    </div>
  );
}

export default function App() {
  return (
    <div className="relative h-[1080px] w-[1920px] overflow-hidden bg-[#050509] font-['Liberation_Sans','Noto_Sans_CJK_SC',sans-serif]">
      <TopBar />
      <TableHeader />
      {ROWS.map((r, i) => (
        <Row key={r[0]} r={r} n={i + 1} />
      ))}
      <Tabs />
      <StatusBar />
      <Taskbar />
      <Menu />
      <Sogou />
      <Watermarks />
    </div>
  );
}
